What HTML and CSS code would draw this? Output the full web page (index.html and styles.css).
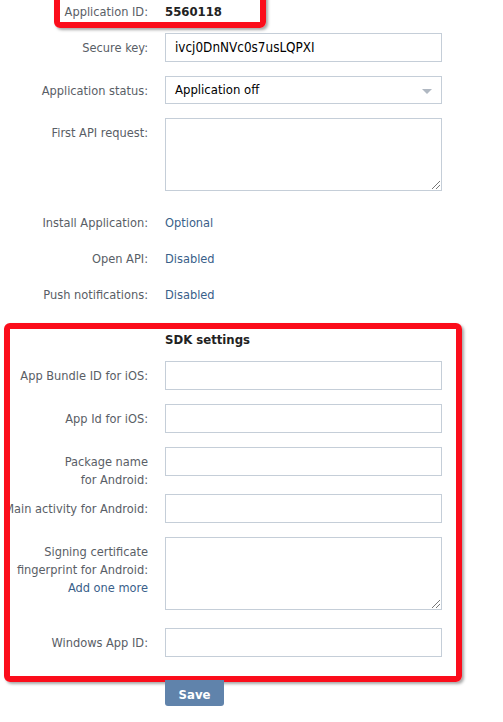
FILE: index.html
```html
<!DOCTYPE html>
<html>
<head>
<meta charset="utf-8">
<link rel="stylesheet" href="styles.css">
</head>
<body>
<div class="page">
  <div class="row text-row id-row">
    <div class="label"><span>Application ID:</span></div>
    <div class="value id-value">5560118</div>
    <div class="mark mark-id"></div>
  </div>
  <div class="row">
    <div class="label"><span>Secure key:</span></div>
    <div class="field input">ivcj0DnNVc0s7usLQPXI</div>
  </div>
  <div class="row">
    <div class="label"><span>Application status:</span></div>
    <div class="field input select">Application off<span class="caret"></span></div>
  </div>
  <div class="row">
    <div class="label"><span>First API request:</span></div>
    <div class="field textarea"><span class="grip"></span></div>
  </div>
  <div class="info">
    <div class="row text-row">
      <div class="label"><span>Install Application:</span></div>
      <div class="value">Optional</div>
    </div>
    <div class="row text-row">
      <div class="label"><span>Open API:</span></div>
      <div class="value">Disabled</div>
    </div>
    <div class="row text-row">
      <div class="label"><span>Push notifications:</span></div>
      <div class="value">Disabled</div>
    </div>
  </div>
  <div class="sdk">
    <div class="row title-row">
      <div class="label"></div>
      <div class="sdk-title">SDK settings</div>
    </div>
    <div class="row">
      <div class="label"><span>App Bundle ID for iOS:</span></div>
      <div class="field input"></div>
    </div>
    <div class="row">
      <div class="label"><span>App Id for iOS:</span></div>
      <div class="field input"></div>
    </div>
    <div class="row">
      <div class="label"><span>Package name<br>for Android:</span></div>
      <div class="field input"></div>
    </div>
    <div class="row">
      <div class="label"><span>Main activity for Android:</span></div>
      <div class="field input"></div>
    </div>
    <div class="row">
      <div class="label"><span>Signing certificate<br>fingerprint for Android:<br><a class="link">Add one more</a></span></div>
      <div class="field textarea sdk-textarea"><span class="grip"></span></div>
    </div>
    <div class="row last">
      <div class="label"><span>Windows App ID:</span></div>
      <div class="field input"></div>
    </div>
    <div class="mark mark-sdk"></div>
  </div>
  <div class="row actions">
    <div class="label"></div>
    <div><button class="save">Save</button></div>
  </div>
</div>
</body>
</html>
```
FILE: styles.css
```css
html, body {
  margin: 0;
  padding: 0;
  background: #fff;
}
body {
  font-family: "DejaVu Sans Condensed", "DejaVu Sans", sans-serif;
  font-size: 12.7px;
  color: #000;
  overflow: hidden;
}
.page {
  padding-top: 3px;
  position: relative;
}
.row {
  display: grid;
  grid-template-columns: 148px 277px;
  column-gap: 17px;
  margin-bottom: 14px;
  position: relative;
  align-items: start;
}
.label {
  display: flex;
  justify-content: flex-end;
  padding-top: 6px;
  margin-bottom: -9px;
  line-height: 18px;
  color: #595e66;
  text-align: right;
  white-space: nowrap;
}
.label .link, .value {
  color: #3a5f8a;
}
.id-row {
  margin-bottom: 12px;
}
.id-row .label {
  padding-top: 0;
  margin-bottom: 0;
}
.id-value {
  font-weight: bold;
  color: #222;
  font-size: 13px;
  line-height: 18px;
}
.field {
  box-sizing: border-box;
  border: 1px solid #c5ced8;
  background: #fff;
  position: relative;
}
.input {
  height: 29px;
  line-height: 27px;
  padding: 0 9px;
  font-size: 13.4px;
}
.select {
  height: 28px;
  line-height: 26px;
  font-size: 13px;
}
.select .caret {
  position: absolute;
  right: 9px;
  top: 12px;
  width: 0;
  height: 0;
  border-left: 5px solid transparent;
  border-right: 5px solid transparent;
  border-top: 5px solid #b0b8c2;
}
.textarea {
  height: 73px;
  margin-bottom: 3px;
}
.sdk-textarea {
  margin-bottom: 4px;
}
.grip {
  position: absolute;
  right: 1px;
  bottom: 1px;
  width: 8px;
  height: 8px;
  background: linear-gradient(135deg, transparent 45%, #777 45%, #777 52%, transparent 52%, transparent 70%, #777 70%, #777 77%, transparent 77%);
}
.text-row .label {
  margin-bottom: 0;
}
.text-row .value {
  padding-top: 6px;
  line-height: 18px;
}
.info .text-row {
  margin-bottom: 12px;
}
.id-row .value {
  padding-top: 0;
}
.sdk {
  position: relative;
  padding-top: 15px;
}
.title-row {
  margin-bottom: 12px;
}
.title-row .label {
  padding-top: 0;
  margin-bottom: 0;
}
.sdk-title {
  font-weight: bold;
  color: #222;
  font-size: 13px;
  line-height: 18px;
}
.sdk .row.last {
  margin-bottom: 23px;
}
.mark {
  position: absolute;
  border: 6px solid #fb0d1b;
  border-radius: 6px;
  box-shadow: 2px 2px 3px rgba(0,0,0,0.35);
  pointer-events: none;
}
.mark-id {
  left: 54px;
  top: -12px;
  width: 200px;
  height: 25px;
}
.mark-sdk {
  left: 4px;
  top: 7px;
  width: 446px;
  height: 347px;
}
.actions {
  margin-bottom: 0;
}
.actions .label {
  margin-bottom: 0;
}
.save {
  font-family: inherit;
  font-weight: bold;
  font-size: 13px;
  color: #fff;
  background: #6083ab;
  border: 0;
  border-radius: 0 0 3px 3px;
  width: 59px;
  height: 26px;
  padding: 2px 0 0;
  margin-top: 0;
}
```
